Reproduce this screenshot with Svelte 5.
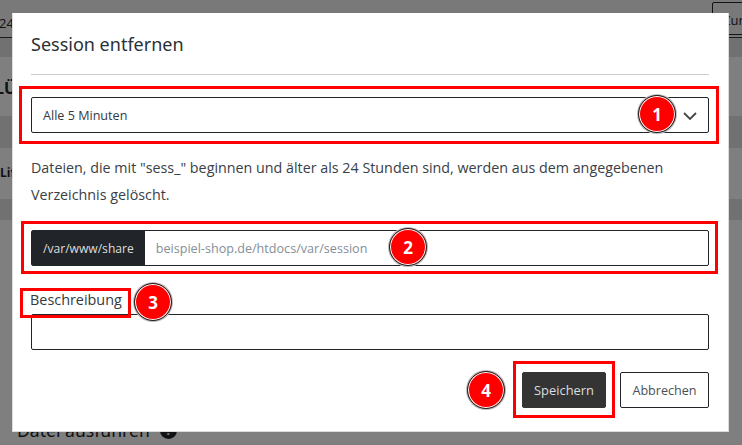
<script>
  // Rahmen und Nummern der Anleitung liegen frei über dem Dialog
  const frames = [
    { x: 19, y: 86, w: 700, h: 58 },
    { x: 21, y: 221, w: 697, h: 53 },
    { x: 20, y: 288, w: 111, h: 30 },
    { x: 513, y: 361, w: 102, h: 57 },
  ]
  const badges = [
    { n: 1, x: 657, y: 114 },
    { n: 2, x: 408, y: 247 },
    { n: 3, x: 153, y: 302 },
    { n: 4, x: 486, y: 390 },
  ]
</script>

<div class="page">
  <div class="band b1"><span class="crumb">24/</span><span class="back">Zurück</span></div>
  <div class="band b2"></div>
  <div class="band b3"><b class="head">LÜ</b></div>
  <div class="band b4"></div>
  <div class="band b5"><b class="small">Lif</b></div>
  <div class="band b6"></div>
  <div class="band b7"></div>
  <div class="run"><span>Datei ausführen</span><i class="dot">!</i></div>
</div>

<div class="backdrop"></div>

<div class="modal">
  <h2>Session entfernen</h2>
  <hr />
  <div class="select">
    <span>Alle 5 Minuten</span>
    <svg class="chev" width="16" height="10" viewBox="0 0 16 10"><path d="M2 2l6 6 6-6" fill="none" stroke="#444" stroke-width="1.8" /></svg>
  </div>
  <p>Dateien, die mit "sess_" beginnen und älter als 24 Stunden sind, werden aus dem angegebenen Verzeichnis gelöscht.</p>
  <div class="group">
    <span class="prefix">/var/www/share</span>
    <span class="placeholder">beispiel-shop.de/htdocs/var/session</span>
  </div>
  <label for="desc">Beschreibung</label>
  <input id="desc" type="text" />
  <div class="actions">
    <button class="save">Speichern</button>
    <button class="cancel">Abbrechen</button>
  </div>
</div>

{#each frames as f}
  <div class="frame" style="left:{f.x}px; top:{f.y}px; width:{f.w}px; height:{f.h}px"></div>
{/each}
{#each badges as b}
  <div class="badge" style="left:{b.x}px; top:{b.y}px">{b.n}</div>
{/each}

<style>
  :global(body) {
    margin: 0;
    width: 742px;
    height: 445px;
    overflow: hidden;
    background: #fff;
    font-family: "Open Sans", "Noto Sans", sans-serif;
    color: #212529;
  }

  .page { width: 742px; height: 445px; overflow: hidden; background: #fff; }
  .band { position: relative; overflow: hidden; background: #fff; }
  .b1 { height: 37px; background: #f2f2f2; }
  .b2 { height: 20px; background: #e2e2e2; border-top: 1px solid #343a40; box-sizing: border-box; }
  .b3 { height: 59px; }
  .b4 { height: 32px; background: #e2e2e2; }
  .b5 { height: 51px; }
  .b6 { height: 21px; background: #e2e2e2; }
  .b7 { height: 205px; margin-bottom: -205px; }
  .crumb { position: absolute; left: -1px; top: 14px; font-size: 13px; }
  .back {
    position: absolute; left: 712px; top: 2px; width: 60px; height: 33px; box-sizing: border-box;
    border: 1px solid #212529; border-radius: 2px; padding: 8px 10px; font-size: 13px;
  }
  .head { position: absolute; left: -5px; top: 20px; font-size: 16px; }
  .small { position: absolute; left: 0; top: 16px; font-size: 12px; }
  .run {
    position: absolute; left: 17px; top: 418px; display: flex; align-items: center; gap: 10px;
    font-family: "Noto Sans", sans-serif; font-size: 17.6px;
  }
  .dot {
    width: 17px; height: 17px; border-radius: 50%; background: #212529; color: #fff;
    display: flex; align-items: center; justify-content: center; font-size: 12px; font-weight: 700; font-style: normal;
  }

  .backdrop { position: absolute; inset: 0; background: rgba(0, 0, 0, 0.5); }

  .modal {
    position: absolute; left: 12px; top: 13px; width: 717px; height: 419px; box-sizing: border-box;
    padding: 18px 19px 0 18px; background: #fff; border: 1px solid #dcdcdc; border-top: 0;
    display: flex; flex-direction: column;
  }
  h2 { margin: 0; font-family: "Noto Sans", sans-serif; font-size: 18px; line-height: 26px; font-weight: 400; color: #2b3036; }
  hr { margin: 17px 0 0; border: 0; border-top: 1px solid #ccc; width: 100%; }
  .select {
    margin-top: 22px; height: 36px; box-sizing: border-box; border: 1px solid #212529; border-radius: 2px;
    display: flex; align-items: center; justify-content: space-between; padding: 0 10px 0 11px;
    font-size: 12.6px; color: #343a40;
  }
  .chev { margin-top: 1px; }
  p { margin: 21px 0 0; font-size: 14.3px; line-height: 27px; color: #3a4047; }
  .group {
    margin-top: 22px; height: 36px; box-sizing: border-box; border: 1px solid #212529; border-radius: 2px;
    display: flex; align-items: center; font-size: 12.6px;
  }
  .prefix {
    height: 100%; display: flex; align-items: center; padding: 0 11px; background: #212529; color: #ddd;
    font-size: 12.1px;
  }
  .placeholder { padding-left: 11px; color: #868e96; }
  label { margin-top: 22px; margin-left: -1px; font-size: 14.4px; line-height: 24px; color: #343a40; }
  input {
    margin-top: 2px; height: 36px; box-sizing: border-box; border: 1px solid #212529; border-radius: 2px;
    background: #fff; padding: 0;
  }
  .actions { margin-top: 22px; display: flex; justify-content: flex-end; gap: 14px; }
  button { height: 36px; box-sizing: border-box; border-radius: 2px; font: inherit; font-size: 12.6px; padding: 0; }
  .save { width: 84px; background: #343434; border: 1px solid #343434; color: #ddd; font-size: 12.9px; }
  .cancel { width: 89px; background: #fff; border: 1px solid #212529; color: #495057; }

  .frame { position: absolute; box-sizing: border-box; border: 3px solid #f00; }
  .badge {
    position: absolute; width: 36px; height: 36px; margin: -19px 0 0 -19px; box-sizing: content-box;
    display: flex; align-items: center; justify-content: center; border-radius: 50%;
    background: #f00; border: 1px solid #222; box-shadow: 0 0 0 1px #bbb, inset 0 0 0 1px #fff;
    color: #fff; font-weight: 700; font-size: 17px;
  }
</style>
